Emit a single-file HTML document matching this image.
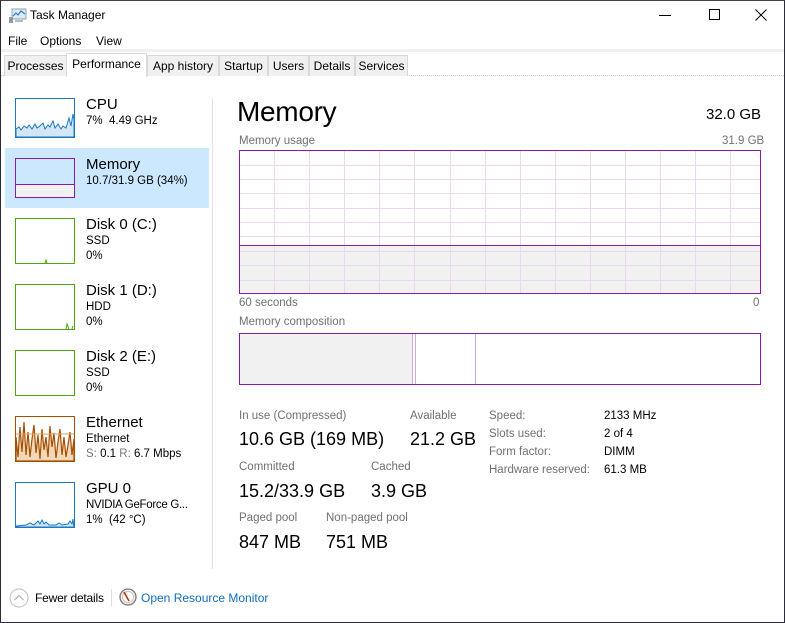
<!DOCTYPE html>
<html><head><meta charset="utf-8"><style>
*{margin:0;padding:0;box-sizing:border-box}
body{width:785px;height:623px;overflow:hidden;background:#fff;font-family:"Liberation Sans",sans-serif;color:#000;position:relative}
.a{position:absolute;white-space:nowrap}
.win{position:absolute;left:0;top:0;width:785px;height:623px;border:1px solid #2b2b3a;border-top:1px solid #444}
.tab{position:absolute;top:55px;height:21px;border:1px solid #d9d9d9;border-bottom:none;background:#f0f0f0;font-size:12px;line-height:20px;text-align:center}
.lbl{font-size:11.5px;color:#707070}
.val{font-size:18px;color:#000}
.th{position:absolute;left:15px;width:60px;border:1px solid}
.t1{font-size:15px}
.t2{font-size:11.5px}
</style></head><body>
<div class="win"></div>
<svg class="a" style="left:9px;top:8px" width="18" height="16" viewBox="0 0 18 16"><rect x="3" y="1" width="14" height="10" fill="#dfe9f5" stroke="#8aa" stroke-width="1"/><path d="M4 8 L7 5 L9 7 L12 3 L16 6" stroke="#2a7ad0" fill="none" stroke-width="1.2"/><rect x="0" y="9" width="4" height="6" fill="#999"/><rect x="6" y="12" width="8" height="2" fill="#bbb"/></svg>
<div class="a" style="left:30px;top:8px;font-size:12px">Task Manager</div>
<div class="a" style="left:659px;top:15px;width:12px;height:1px;background:#000"></div>
<div class="a" style="left:709px;top:9px;width:11px;height:11px;border:1px solid #000"></div>
<svg class="a" style="left:755px;top:9px" width="12" height="12"><path d="M0.5 0.5 L11.5 11.5 M11.5 0.5 L0.5 11.5" stroke="#000" stroke-width="1"/></svg>
<div class="a" style="left:8px;top:34px;font-size:12px">File</div>
<div class="a" style="left:40px;top:34px;font-size:12px">Options</div>
<div class="a" style="left:96px;top:34px;font-size:12px">View</div>
<div class="a" style="left:1px;top:49px;width:783px;height:3px;background:#f0f0f0"></div>
<div class="a" style="left:1px;top:75px;width:783px;border-top:1px dotted #c8c8c8"></div>
<div class="tab" style="left:4px;width:63px">Processes</div>
<div class="tab" style="left:147px;width:72px">App history</div>
<div class="tab" style="left:219px;width:49px">Startup</div>
<div class="tab" style="left:268px;width:41px">Users</div>
<div class="tab" style="left:309px;width:46px">Details</div>
<div class="tab" style="left:355px;width:53px">Services</div>
<div class="tab" style="left:66px;top:53px;width:81px;height:24px;background:#fff;line-height:20px">Performance</div>
<div class="a" style="left:5px;top:148px;width:204px;height:60px;background:#cce8ff"></div>
<div class="a" style="left:212px;top:98px;width:1px;height:471px;background:#ecdcf0"></div>

<div class="th" style="top:98px;height:40px;border-color:#1a79c2"><svg width="58" height="38" style="display:block"><path d="M0 38 L0 30 L3 28 L5 31 L8 27 L11 29 L13 26 L16 30 L19 25 L21 29 L24 27 L27 24 L29 30 L32 26 L34 28 L37 22 L39 29 L42 25 L45 30 L47 27 L50 29 L53 19 L55 27 L57 15 L58 20 L58 38 Z" fill="#d4e6f4" stroke="#1a79c2" stroke-width="1"/></svg></div>
<div class="a t1" style="left:86px;top:96px">CPU</div>
<div class="a t2" style="left:86px;top:115px">7%&nbsp; 4.49 GHz</div>

<div class="th" style="top:158px;height:40px;border-color:#8b18b0"><div style="position:absolute;left:0;top:25px;width:58px;height:13px;background:#f1f1f1;border-top:1px solid #8b18b0"></div></div>
<div class="a t1" style="left:86px;top:156px">Memory</div>
<div class="a t2" style="left:86px;top:175px">10.7/31.9 GB (34%)</div>

<div class="th" style="top:218px;height:46px;border-color:#4da60c"><svg width="58" height="44" style="display:block"><path d="M29 44 L30 41 L31 44" stroke="#4da60c" fill="none"/></svg></div>
<div class="a t1" style="left:86px;top:216px">Disk 0 (C:)</div>
<div class="a t2" style="left:86px;top:235px">SSD</div>
<div class="a t2" style="left:86px;top:250px">0%</div>

<div class="th" style="top:284px;height:46px;border-color:#4da60c"><svg width="58" height="44" style="display:block"><path d="M50 44 L51 39 L53 44 M56 44 L57 41" stroke="#4da60c" fill="none"/></svg></div>
<div class="a t1" style="left:86px;top:282px">Disk 1 (D:)</div>
<div class="a t2" style="left:86px;top:301px">HDD</div>
<div class="a t2" style="left:86px;top:316px">0%</div>

<div class="th" style="top:350px;height:46px;border-color:#4da60c"></div>
<div class="a t1" style="left:86px;top:348px">Disk 2 (E:)</div>
<div class="a t2" style="left:86px;top:367px">SSD</div>
<div class="a t2" style="left:86px;top:382px">0%</div>

<div class="th" style="top:416px;height:46px;border-color:#a74f01;background:#fff"><svg width="58" height="44" style="display:block"><path d="M0 44 L0 20 L2 40 L4 10 L6 35 L8 5 L10 38 L12 15 L14 40 L16 22 L18 8 L20 36 L22 18 L24 42 L26 12 L28 33 L30 20 L32 40 L34 9 L36 30 L38 16 L40 41 L42 25 L44 12 L46 38 L48 20 L50 40 L52 28 L54 15 L56 38 L58 22 L58 44Z" fill="#f2d8b8" stroke="#a74f01" stroke-width="1.2"/><path d="M0 17 H58" stroke="#d9a060" stroke-width="1"/></svg></div>
<div class="a t1" style="left:86px;top:414px">Ethernet</div>
<div class="a t2" style="left:86px;top:433px">Ethernet</div>
<div class="a t2" style="left:86px;top:448px"><span style="color:#777">S:</span> 0.1 <span style="color:#777">R:</span> 6.7 Mbps</div>

<div class="th" style="top:482px;height:46px;border-color:#1a79c2"><svg width="58" height="44" style="display:block"><path d="M0 43 L10 42 L14 40 L18 42 L22 38 L24 41 L26 37 L28 41 L30 39 L33 42 L40 42 L43 40 L46 42 L52 41 L54 38 L56 41 L57 36 L58 44 L0 44Z" fill="#d4e6f4" stroke="#1a79c2" stroke-width="1"/></svg></div>
<div class="a t1" style="left:86px;top:480px">GPU 0</div>
<div class="a t2" style="left:86px;top:499px;letter-spacing:-0.3px">NVIDIA GeForce G...</div>
<div class="a t2" style="left:86px;top:514px">1%&nbsp; (42 °C)</div>

<div class="a" style="left:237px;top:96px;font-size:28px;letter-spacing:-0.3px">Memory</div>
<div class="a" style="left:706px;top:106px;font-size:15px">32.0 GB</div>
<div class="a lbl" style="left:239px;top:135px">Memory usage</div>
<div class="a lbl" style="left:722px;top:135px">31.9 GB</div>
<svg class="a" style="left:239px;top:150px" width="522" height="144">
<rect x="0" y="95" width="522" height="48" fill="#f1f1f1"/>
<g stroke="#ead8f0" stroke-width="1">
<path d="M35.5 0V144M70.5 0V144M105.5 0V144M140.5 0V144M175.5 0V144M211.5 0V144M246.5 0V144M281.5 0V144M316.5 0V144M351.5 0V144M386.5 0V144M421.5 0V144M456.5 0V144M491.5 0V144"/>
<path d="M0 15.5H522M0 29.5H522M0 43.5H522M0 58.5H522M0 72.5H522M0 86.5H522M0 101.5H522M0 115.5H522M0 130.5H522"/>
</g>
<path d="M0 95.5H522" stroke="#8b18b0" stroke-width="1"/>
<rect x="0.5" y="0.5" width="521" height="143" fill="none" stroke="#8b18b0" stroke-width="1"/>
</svg>
<div class="a lbl" style="left:239px;top:297px">60 seconds</div>
<div class="a lbl" style="left:753px;top:297px">0</div>
<div class="a lbl" style="left:239px;top:316px">Memory composition</div>
<svg class="a" style="left:239px;top:333px" width="522" height="52">
<rect x="0" y="0" width="173" height="52" fill="#f1f1f1"/>
<path d="M173.5 0V52M176.5 0V52M236.5 0V52" stroke="#c9a8d8" stroke-width="1"/>
<rect x="0.5" y="0.5" width="521" height="51" fill="none" stroke="#8b18b0" stroke-width="1"/>
</svg>
<div class="a lbl" style="left:239px;top:410px">In use (Compressed)</div>
<div class="a val" style="left:239px;top:429px">10.6 GB (169 MB)</div>
<div class="a lbl" style="left:410px;top:410px">Available</div>
<div class="a val" style="left:410px;top:429px">21.2 GB</div>
<div class="a lbl" style="left:239px;top:461px">Committed</div>
<div class="a val" style="left:239px;top:481px">15.2/33.9 GB</div>
<div class="a lbl" style="left:371px;top:461px">Cached</div>
<div class="a val" style="left:371px;top:481px">3.9 GB</div>
<div class="a lbl" style="left:239px;top:512px">Paged pool</div>
<div class="a val" style="left:239px;top:532px">847 MB</div>
<div class="a lbl" style="left:326px;top:512px">Non-paged pool</div>
<div class="a val" style="left:326px;top:532px">751 MB</div>
<div class="a lbl" style="left:489px;top:410px">Speed:</div>
<div class="a lbl" style="left:489px;top:428px">Slots used:</div>
<div class="a lbl" style="left:489px;top:446px">Form factor:</div>
<div class="a lbl" style="left:489px;top:464px">Hardware reserved:</div>
<div class="a" style="left:604px;top:410px;font-size:11.5px">2133 MHz</div>
<div class="a" style="left:604px;top:428px;font-size:11.5px">2 of 4</div>
<div class="a" style="left:604px;top:446px;font-size:11.5px">DIMM</div>
<div class="a" style="left:604px;top:464px;font-size:11.5px">61.3 MB</div>
<svg class="a" style="left:9px;top:588px" width="20" height="20"><circle cx="10" cy="10" r="9" fill="none" stroke="#c8c8c8" stroke-width="1.2"/><path d="M5.5 12 L10 7.5 L14.5 12" fill="none" stroke="#b0b0b0" stroke-width="1.2"/></svg>
<div class="a" style="left:35px;top:591px;font-size:12px;letter-spacing:-0.2px">Fewer details</div>
<div class="a" style="left:111px;top:589px;width:1px;height:17px;background:#ddd"></div>
<svg class="a" style="left:119px;top:588px" width="18" height="18"><circle cx="9" cy="9" r="8" fill="#f4eee4" stroke="#777" stroke-width="1.3"/><circle cx="9" cy="9" r="5.5" fill="#fff" stroke="#bbb" stroke-width="0.8"/><path d="M5 4 L10 13" stroke="#c03010" stroke-width="1.6"/></svg>
<div class="a" style="left:141px;top:591px;font-size:12px;color:#0f6cbd">Open Resource Monitor</div>
</body></html>
